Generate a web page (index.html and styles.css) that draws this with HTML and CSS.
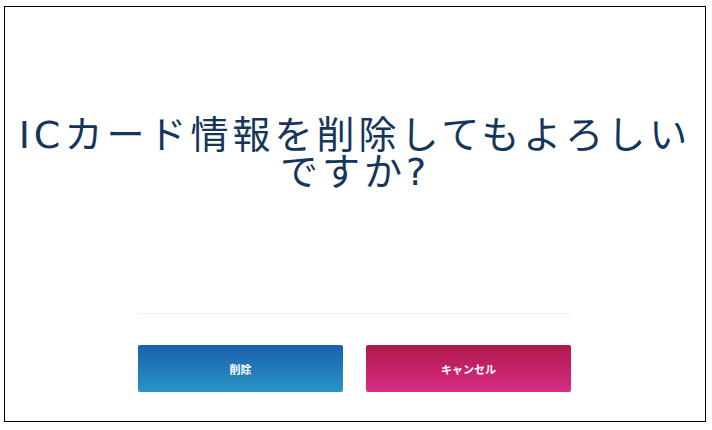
FILE: index.html
```html
<!DOCTYPE html>
<html lang="ja">
<head>
<meta charset="utf-8">
<link rel="stylesheet" href="styles.css">
</head>
<body>
<div class="frame">
  <h1 class="title">ICカード情報を削除してもよろしいですか?</h1>
  <hr class="divider">
  <div class="actions">
    <button class="btn btn-delete">削除</button>
    <button class="btn btn-cancel">キャンセル</button>
  </div>
</div>
</body>
</html>
```
FILE: styles.css
```css
html, body {
  margin: 0;
  padding: 0;
  background: #fff;
}
.frame {
  margin: 6px 0 0 4px;
  width: 702px;
  height: 416px;
  box-sizing: border-box;
  border: 1px solid #000;
  display: flex;
  flex-direction: column;
  align-items: center;
}
.title {
  margin: 110px 0 0;
  padding: 0 8px;
  font-family: "DejaVu Sans", "Noto Sans CJK JP", sans-serif;
  font-weight: normal;
  font-size: 38px;
  line-height: 37px;
  letter-spacing: 4px;
  color: #15365a;
  text-align: center;
}
.divider {
  margin: auto 0 0 -1px;
  width: 433px;
  border: 0;
  border-top: 1px solid #eeeeee;
  height: 0;
}
.actions {
  margin: 31px 0 29px -1px;
  display: flex;
  gap: 23px;
}
.btn {
  width: 205px;
  height: 47px;
  border: 0;
  border-radius: 2px;
  color: #fff;
  font-family: "Noto Sans CJK JP", sans-serif;
  font-weight: bold;
  font-size: 11px;
  padding: 0;
}
.btn-delete {
  background: linear-gradient(to bottom, #1a60ad, #2994c4);
}
.btn-cancel {
  background: linear-gradient(to bottom, #ad184a, #da2d88);
}
```
